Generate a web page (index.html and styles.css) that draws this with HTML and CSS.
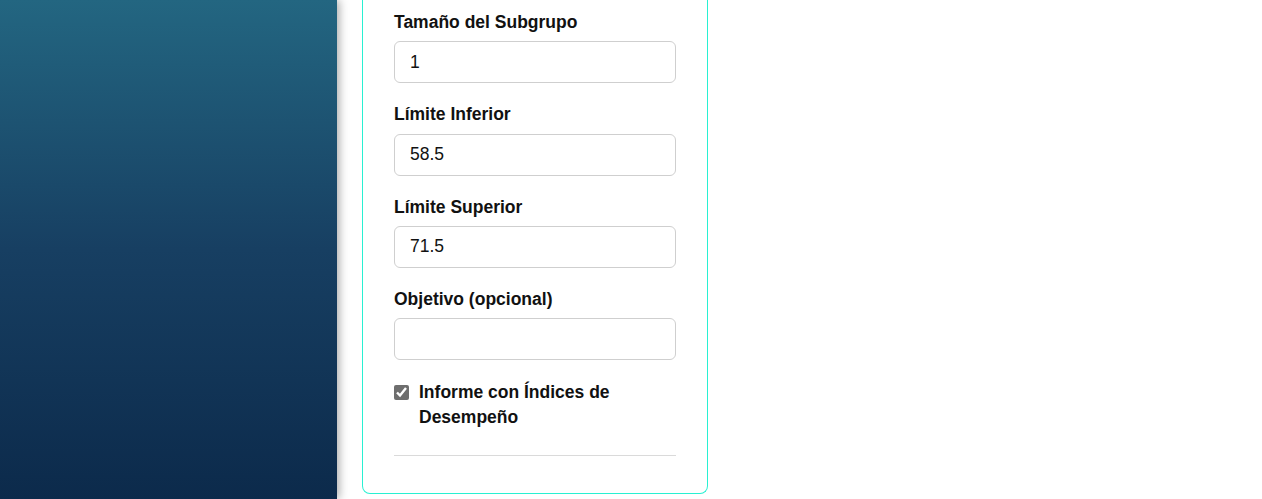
FILE: index.html
```html
<!DOCTYPE html>
<html lang="es">
<head>
<meta charset="utf-8">
<title>Parámetros</title>
<link rel="stylesheet" href="styles.css">
</head>
<body>
<div class="layout">
  <aside class="sidebar"></aside>
  <main class="main">
    <section class="card">
      <div class="field">
        <label class="label" for="sub">Tamaño del Subgrupo</label>
        <input class="input" id="sub" type="text" value="1">
      </div>
      <div class="field">
        <label class="label" for="lie">Límite Inferior</label>
        <input class="input" id="lie" type="text" value="58.5">
      </div>
      <div class="field">
        <label class="label" for="lse">Límite Superior</label>
        <input class="input" id="lse" type="text" value="71.5">
      </div>
      <div class="field">
        <label class="label" for="obj">Objetivo (opcional)</label>
        <input class="input" id="obj" type="text" value="">
      </div>
      <label class="check">
        <input type="checkbox" class="checkbox" checked>
        <span>Informe con Índices de Desempeño</span>
      </label>
      <hr class="divider">
    </section>
  </main>
</div>
</body>
</html>
```
FILE: styles.css
```css
* { box-sizing: border-box; }
html, body { margin: 0; padding: 0; height: 100%; overflow: hidden; }
body {
  font-family: "Liberation Sans", Arial, sans-serif;
  background: #fff;
  color: #111;
}
.layout {
  display: flex;
  height: 499px;
}
.sidebar {
  width: 337px;
  flex: none;
  background: linear-gradient(to bottom, #236681 0%, #173f62 50%, #0c2a4b 100%);
  box-shadow: 2px 0 9px rgba(0,0,0,0.35);
  position: relative;
  z-index: 1;
}
.main {
  padding-left: 25px;
  display: flex;
  align-items: flex-start;
}
.card {
  width: 346px;
  border: 1px solid #28f0d2;
  border-top: 0;
  border-radius: 0 0 8px 8px;
  padding: 9px 31px 37px;
}
.field {
  display: flex;
  flex-direction: column;
  margin-bottom: 18px;
}
.label {
  font-size: 17.5px;
  font-weight: 700;
  line-height: 26.3px;
  margin-bottom: 6px;
  color: #111;
}
.input {
  height: 42px;
  border: 1px solid #cfcfcf;
  border-radius: 6px;
  padding: 0 15px;
  font-family: "Liberation Sans", Arial, sans-serif;
  font-size: 17.5px;
  color: #111;
  outline: none;
}
.check {
  display: flex;
  align-items: flex-start;
  gap: 10px;
  font-size: 17.5px;
  font-weight: 700;
  line-height: 25px;
  margin-top: 20px;
}
.checkbox {
  margin: 5px 0 0 0;
  width: 15px;
  height: 15px;
  flex: none;
  accent-color: #6e6e6e;
}
.divider {
  border: 0;
  border-top: 1px solid #dadada;
  margin: 25px 0 0;
}
```
